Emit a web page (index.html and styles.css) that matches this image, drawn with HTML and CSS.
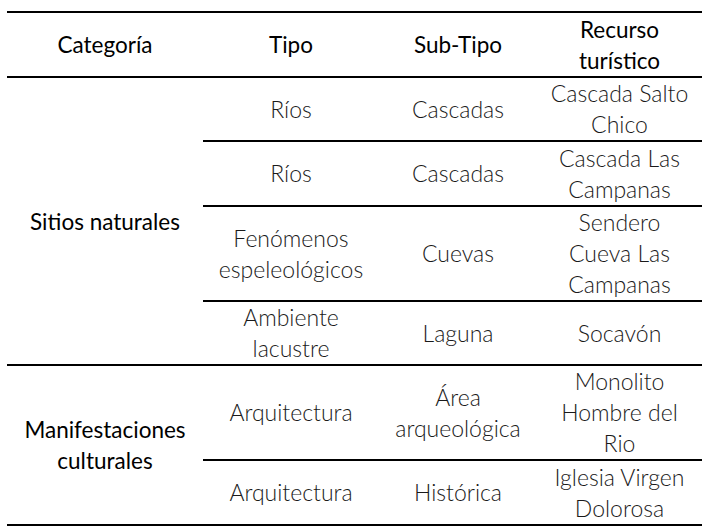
FILE: index.html
```html
<!DOCTYPE html>
<html lang="es">
<head>
<meta charset="utf-8">
<link rel="stylesheet" href="styles.css">
</head>
<body>
<table class="tbl">
  <colgroup>
    <col class="c1"><col class="c2"><col class="c3"><col class="c4">
  </colgroup>
  <thead>
    <tr class="r-head">
      <th>Categoría</th>
      <th>Tipo</th>
      <th>Sub-Tipo</th>
      <th>Recurso<br>turístico</th>
    </tr>
  </thead>
  <tbody class="group">
    <tr class="r1">
      <td class="cat" rowspan="4">Sitios naturales</td>
      <td>Ríos</td>
      <td>Cascadas</td>
      <td>Cascada Salto<br>Chico</td>
    </tr>
    <tr class="r2">
      <td>Ríos</td>
      <td>Cascadas</td>
      <td>Cascada Las<br>Campanas</td>
    </tr>
    <tr class="r3">
      <td>Fenómenos<br>espeleológicos</td>
      <td>Cuevas</td>
      <td>Sendero<br>Cueva Las<br>Campanas</td>
    </tr>
    <tr class="r4 last">
      <td>Ambiente<br>lacustre</td>
      <td>Laguna</td>
      <td>Socavón</td>
    </tr>
  </tbody>
  <tbody class="group">
    <tr class="r5">
      <td class="cat" rowspan="2">Manifestaciones<br>culturales</td>
      <td>Arquitectura</td>
      <td>Área<br>arqueológica</td>
      <td>Monolito<br>Hombre del<br>Rio</td>
    </tr>
    <tr class="r6 last">
      <td>Arquitectura</td>
      <td>Histórica</td>
      <td>Iglesia Virgen<br>Dolorosa</td>
    </tr>
  </tbody>
</table>
</body>
</html>
```

FILE: styles.css
```css
html, body {
  margin: 0;
  padding: 0;
  background: #ffffff;
}

body {
  padding: 11px 0 0 7px;
  font-family: "Lato", "Liberation Sans", sans-serif;
}

.tbl {
  width: 695px;
  border-collapse: collapse;
  table-layout: fixed;
  border-top: 2px solid #000;
  border-bottom: 2px solid #000;
}

.c1 { width: 196px; }
.c2 { width: 176px; }
.c3 { width: 158px; }
.c4 { width: 165px; }

th, td {
  padding: 0;
  text-align: center;
  vertical-align: middle;
  font-size: 23px;
  line-height: 31px;
}

th {
  font-size: 22.5px;
  font-weight: 400;
  color: #000;
}

td {
  font-weight: 300;
  color: #1a1a1a;
}

td.cat {
  font-size: 22.5px;
  font-weight: 400;
  color: #000;
}

.r-head th {
  height: 63px;
  border-bottom: 2px solid #000;
}

.r1 td { height: 61px; border-bottom: 2px solid #000; }
.r2 td { height: 63px; border-bottom: 2px solid #000; }
.r3 td { height: 92px; border-bottom: 2px solid #000; }
.r4 td { height: 61px; }
.r5 td { height: 93px; border-bottom: 2px solid #000; }
.r6 td { height: 63px; }

tr.last td,
td.cat {
  border-bottom: 2px solid #000;
}
```
